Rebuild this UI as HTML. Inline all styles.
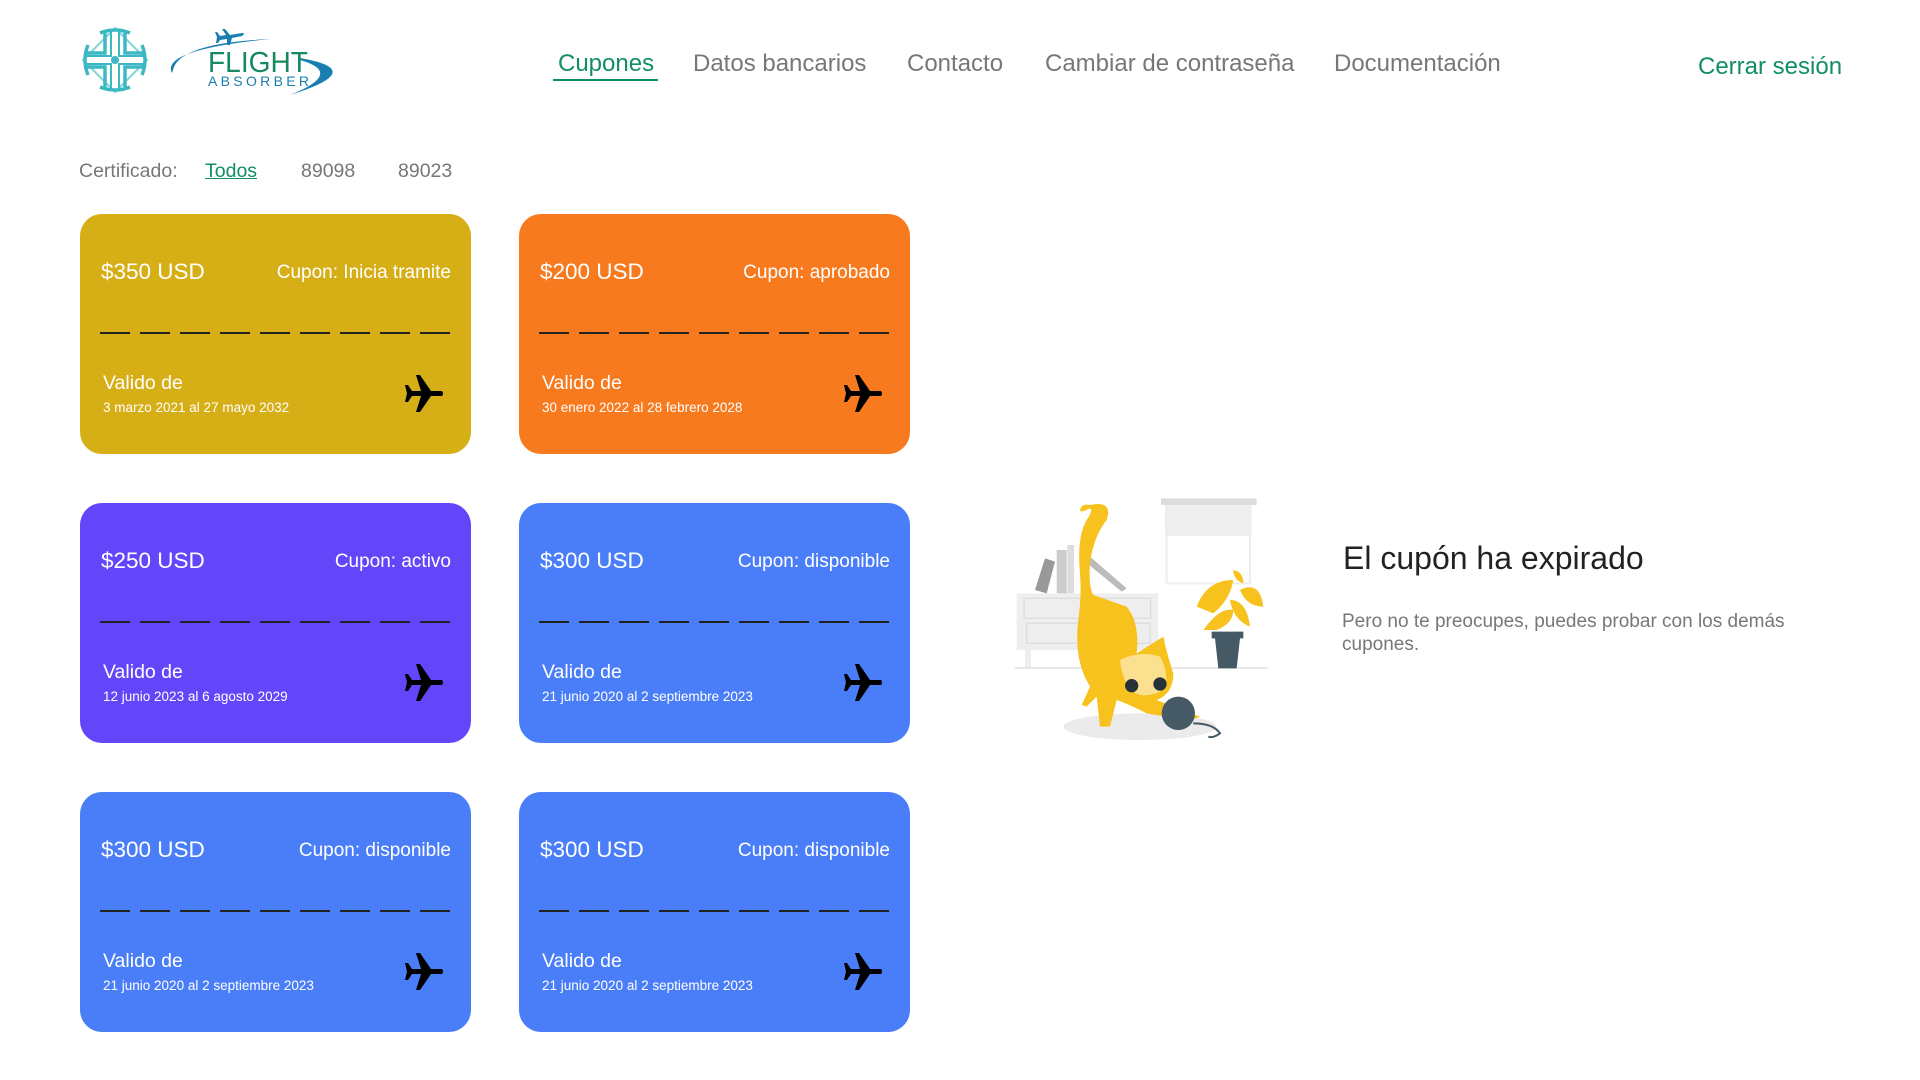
<!DOCTYPE html>
<html><head><meta charset="utf-8"><style>
*{margin:0;padding:0;box-sizing:border-box}
body{width:1920px;height:1080px;background:#fff;font-family:"Liberation Sans",Arial,sans-serif;position:relative;overflow:hidden}
.a{position:absolute;white-space:nowrap}
.nav{font-size:24px;color:#777;top:50px}
.card{position:absolute;width:391px;height:240px;border-radius:22px;color:#fff}
.card .p{position:absolute;left:21px;top:45px;font-size:22.5px}
.card .s{position:absolute;right:20px;top:48px;font-size:19px}
.card .d{position:absolute;left:20px;right:20px;top:118px;height:2px;background:repeating-linear-gradient(90deg,#222 0 30px,transparent 30px 40px)}
.card .v{position:absolute;left:23px;top:158px;font-size:19.5px}
.card .t{position:absolute;left:23px;top:186px;font-size:13.5px}
.card svg{position:absolute;left:324px;top:160px}
</style></head><body>
<svg class="a" style="left:80px;top:25px" width="70" height="70" viewBox="0 0 70 70" fill="none" stroke="#3bb8c4" stroke-width="3.5">
<path d="M35 3 L67 35 L35 67 L3 35 Z" stroke-width="2" stroke="#7fd4da"/>
<path d="M20 8 Q35 2 50 8 M8 20 Q2 35 8 50 M62 20 Q68 35 62 50 M20 62 Q35 68 50 62"/>
<path d="M25 8 V28 H5 M45 8 V28 H65 M25 62 V42 H5 M45 62 V42 H65"/>
<path d="M31 5 V31 H5 M39 5 V31 H65 M31 65 V39 H5 M39 65 V39 H65" stroke-width="2"/>
<circle cx="35" cy="35" r="4" fill="#3bb8c4" stroke="none"/>
</svg>
<svg class="a" style="left:170px;top:25px" width="180" height="72" viewBox="0 0 180 72">
<path d="M4 42 Q14 18 100 14 Q-10 25 2 48 Z" fill="#1a7fb0"/>
<path d="M130 33 Q200 45 120 70 Q175 48 130 35 Z" fill="#1a7fb0"/>
<path d="M52 4 L55 4 L60 10 L72 8 Q76 8 72 11 L62 13 L60 20 L57 20 L57 14 L50 15 L48 18 L46 18 L47 12 L45 7 L47 7 L50 11 L56 10 Z" fill="#1a7fb0"/>
<text x="38" y="47" font-family="Liberation Sans" font-size="29" fill="#148a5e" textLength="100" lengthAdjust="spacingAndGlyphs">FLIGHT</text>
<text x="38" y="61" font-family="Liberation Sans" font-size="14" fill="#1a7fb0" textLength="101" lengthAdjust="spacing">ABSORBER</text>
</svg>
<div class="a nav" style="left:558px;color:#118f62">Cupones</div>
<div class="a" style="left:553px;top:79px;width:105px;height:2px;background:#118f62"></div>
<div class="a nav" style="left:693px">Datos bancarios</div>
<div class="a nav" style="left:907px">Contacto</div>
<div class="a nav" style="left:1045px">Cambiar de contraseña</div>
<div class="a nav" style="left:1334px">Documentación</div>
<div class="a nav" style="left:1698px;top:53px;color:#118f62">Cerrar sesión</div>
<div class="a" style="left:79px;top:160px;font-size:19.5px;color:#777">Certificado:</div>
<div class="a" style="left:205px;top:160px;font-size:19.5px;color:#118f62;text-decoration:underline">Todos</div>
<div class="a" style="left:301px;top:160px;font-size:19.5px;color:#777">89098</div>
<div class="a" style="left:398px;top:160px;font-size:19.5px;color:#777">89023</div>

<div class="card" style="left:80px;top:214px;background:#d6af17"><div class="p">$350 USD</div><div class="s">Cupon: Inicia tramite</div><div class="d"></div><div class="v">Valido de</div><div class="t">3 marzo 2021 al 27 mayo 2032</div><svg width="40" height="40" viewBox="0 0 40 40"><path d="M12 1H16L27 17H38Q40 19.5 38 22H27L16 38H12L17 22H8L4 28H1L3 19.5L1 11H4L8 17H17Z" fill="#000"/></svg></div>
<div class="card" style="left:519px;top:214px;background:#f77a1f"><div class="p">$200 USD</div><div class="s">Cupon: aprobado</div><div class="d"></div><div class="v">Valido de</div><div class="t">30 enero 2022 al 28 febrero 2028</div><svg width="40" height="40" viewBox="0 0 40 40"><path d="M12 1H16L27 17H38Q40 19.5 38 22H27L16 38H12L17 22H8L4 28H1L3 19.5L1 11H4L8 17H17Z" fill="#000"/></svg></div>
<div class="card" style="left:80px;top:503px;background:#6346fa"><div class="p">$250 USD</div><div class="s">Cupon: activo</div><div class="d"></div><div class="v">Valido de</div><div class="t">12 junio 2023 al 6 agosto 2029</div><svg width="40" height="40" viewBox="0 0 40 40"><path d="M12 1H16L27 17H38Q40 19.5 38 22H27L16 38H12L17 22H8L4 28H1L3 19.5L1 11H4L8 17H17Z" fill="#000"/></svg></div>
<div class="card" style="left:519px;top:503px;background:#4a7ef9"><div class="p">$300 USD</div><div class="s">Cupon: disponible</div><div class="d"></div><div class="v">Valido de</div><div class="t">21 junio 2020 al 2 septiembre 2023</div><svg width="40" height="40" viewBox="0 0 40 40"><path d="M12 1H16L27 17H38Q40 19.5 38 22H27L16 38H12L17 22H8L4 28H1L3 19.5L1 11H4L8 17H17Z" fill="#000"/></svg></div>
<div class="card" style="left:80px;top:792px;background:#4a7ef9"><div class="p">$300 USD</div><div class="s">Cupon: disponible</div><div class="d"></div><div class="v">Valido de</div><div class="t">21 junio 2020 al 2 septiembre 2023</div><svg width="40" height="40" viewBox="0 0 40 40"><path d="M12 1H16L27 17H38Q40 19.5 38 22H27L16 38H12L17 22H8L4 28H1L3 19.5L1 11H4L8 17H17Z" fill="#000"/></svg></div>
<div class="card" style="left:519px;top:792px;background:#4a7ef9"><div class="p">$300 USD</div><div class="s">Cupon: disponible</div><div class="d"></div><div class="v">Valido de</div><div class="t">21 junio 2020 al 2 septiembre 2023</div><svg width="40" height="40" viewBox="0 0 40 40"><path d="M12 1H16L27 17H38Q40 19.5 38 22H27L16 38H12L17 22H8L4 28H1L3 19.5L1 11H4L8 17H17Z" fill="#000"/></svg></div>

<svg class="a" style="left:1000px;top:480px" width="300" height="270" viewBox="0 0 900 810">
<rect x="483" y="55" width="287" height="20" fill="#ddd"/>
<rect x="495" y="75" width="260" height="90" fill="#eee"/>
<rect x="500" y="165" width="250" height="145" fill="none" stroke="#eee" stroke-width="6"/>
<rect x="50" y="340" width="425" height="170" fill="#eee"/>
<rect x="72" y="355" width="380" height="60" fill="none" stroke="#ddd" stroke-width="4"/>
<rect x="80" y="430" width="370" height="60" fill="none" stroke="#ddd" stroke-width="4"/>
<rect x="75" y="510" width="18" height="55" fill="#eee"/>
<path d="M105 330 L135 235 L165 245 L140 340Z" fill="#999"/>
<rect x="170" y="210" width="30" height="130" fill="#ccc"/><rect x="202" y="195" width="20" height="145" fill="#ddd"/>
<path d="M270 230 L380 325 L365 335 L255 245Z" fill="#bbb"/>
<rect x="45" y="562" width="760" height="4" fill="#ddd"/>
<ellipse cx="420" cy="740" rx="230" ry="40" fill="#ebebeb"/>
<path d="M590 380 Q620 300 700 300 Q690 360 640 400Z M610 450 Q660 380 700 390 Q700 430 650 450Z M720 330 Q780 300 790 380 Q740 380 720 330Z M690 360 Q740 360 750 440 Q700 420 690 360Z M700 270 Q730 275 730 310 Q700 300 700 270Z" fill="#f7c21e"/>
<path d="M635 455 H730 V475 H720 L710 565 H655 L645 475 H635Z" fill="#455a64"/>
<path d="M270 75 Q340 60 320 120 Q280 170 270 250 Q265 320 280 345 L380 380 Q420 430 410 520 L490 470 Q500 520 520 580 Q520 640 470 660 L600 710 Q580 720 560 720 L440 700 Q380 670 350 660 L330 740 L300 740 L290 650 L260 680 L245 675 L270 620 Q220 540 235 420 Q245 350 240 280 Q230 170 260 120 Q280 90 270 85 Q240 100 240 90 Q245 70 270 75Z" fill="#f7c21e"/>
<path d="M360 540 Q420 510 480 530 Q500 560 500 620 Q470 650 420 645 Q370 630 360 540Z" fill="#fff" opacity=".5"/>
<circle cx="395" cy="617" r="20" fill="#263238"/><circle cx="480" cy="612" r="20" fill="#263238"/>
<circle cx="535" cy="700" r="50" fill="#455a64"/>
<path d="M580 730 Q640 730 660 760 Q640 775 625 770" stroke="#455a64" stroke-width="6" fill="none"/>
</svg>
<div class="a" style="left:1343px;top:540px;font-size:32px;color:#222">El cupón ha expirado</div>
<div class="a" style="left:1342px;top:610px;font-size:19px;color:#777;white-space:normal;width:480px;line-height:23px">Pero no te preocupes, puedes probar con los demás cupones.</div>
</body></html>
